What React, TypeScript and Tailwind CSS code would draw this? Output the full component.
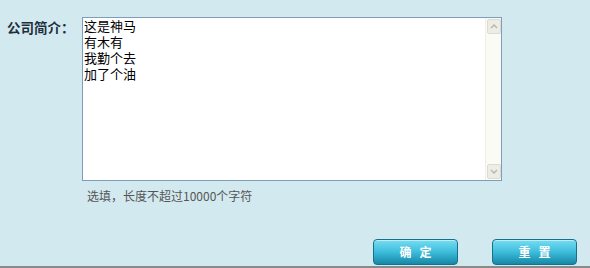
import React from "react";

const cjk = { fontFamily: '"SimSun","Noto Sans CJK SC","DejaVu Sans",sans-serif' };

function Btn({ label }: { label: string }) {
  return (
    <button
      className="w-[85px] h-[26px] rounded-[4px] border border-[#17708a] bg-gradient-to-b from-[#74ddf2] via-[#3cbddc] to-[#1688a6] text-white text-[12px] font-bold tracking-[8px] pl-[8px] flex items-center justify-center shadow-[inset_0_1px_0_rgba(255,255,255,0.5)]"
      style={cjk}
    >
      {label}
    </button>
  );
}

export default function App() {
  return (
    <div className="w-[590px] h-[268px] bg-[#d3e9f0] border-b-2 border-[#8a8a8a] box-border flex flex-col" style={cjk}>
      <div className="flex pt-[17px]">
        <div className="w-[82px] pl-[7px] pt-[2px] text-[13.5px] leading-[16px] font-bold text-[#1d2f3c]">公司简介：</div>
        <div className="flex flex-col">
          <div className="w-[420px] h-[164px] border border-[#7f9db9] bg-white flex">
            <div className="flex-1 pl-[1px] text-[13px] leading-[16px] text-black">
              <div>这是神马</div>
              <div>有木有</div>
              <div>我勤个去</div>
              <div>加了个油</div>
            </div>
            <div className="w-[16px] bg-[#fbfbf6] border-l border-[#efefe6] flex flex-col justify-between py-[1px] pr-[1px]">
              <div className="h-[15px] w-[14px] ml-[1px] bg-[#eeede5] border border-[#dcdcd3] rounded-[2px] flex items-center justify-center">
                <svg width="8" height="5" viewBox="0 0 8 5"><path d="M1 4 L4 1 L7 4" stroke="#b9b9b0" strokeWidth="1.5" fill="none" /></svg>
              </div>
              <div className="h-[15px] w-[14px] ml-[1px] bg-[#eeede5] border border-[#dcdcd3] rounded-[2px] flex items-center justify-center">
                <svg width="8" height="5" viewBox="0 0 8 5"><path d="M1 1 L4 4 L7 1" stroke="#b9b9b0" strokeWidth="1.5" fill="none" /></svg>
              </div>
            </div>
          </div>
          <div className="mt-[8px] ml-[5px] text-[12px] leading-[14px] text-[#555555]">选填，长度不超过10000个字符</div>
        </div>
      </div>
      <div className="flex justify-end gap-[34px] pr-[13px] mt-[36px]">
        <Btn label="确定" />
        <Btn label="重置" />
      </div>
    </div>
  );
}
